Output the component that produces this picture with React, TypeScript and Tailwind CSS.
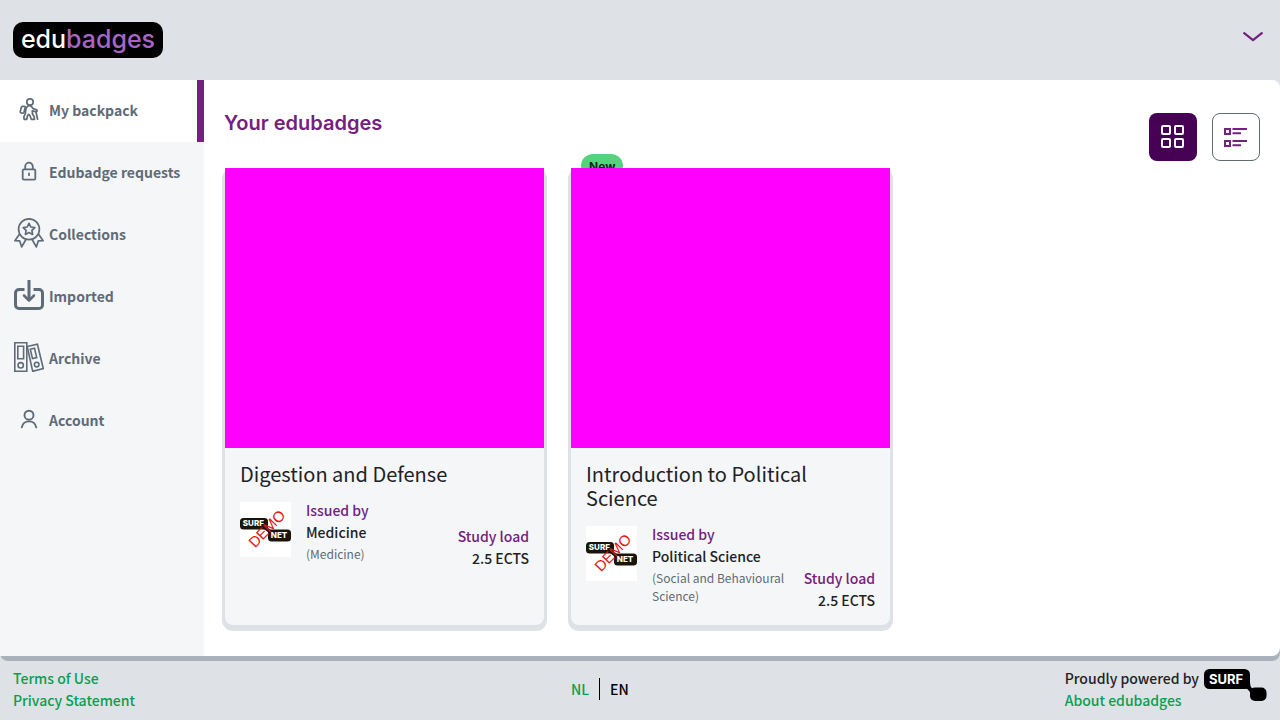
import type { ReactNode } from "react";

const BODY_FONT = "font-['Noto_Sans_CJK_SC','Noto_Sans',sans-serif]";

function BackpackIcon() {
  return (
    <svg width="30" height="30" viewBox="0 0 30 30" fill="none" stroke="currentColor" strokeWidth="1.7" strokeLinejoin="round" strokeLinecap="round" aria-hidden="true">
      <circle cx="16" cy="8" r="3.200" />
      <path d="M8.700 12.400h1.600c.8 0 1.100.5.900 1.200l-1.200 4.700c-.2.700-.6 1-1.300.9l-1.500-.3c-.8-.2-1.100-.7-.9-1.500l.9-3.800c.2-.8.700-1.200 1.500-1.200z" />
      <path d="M13.400 12.400c1.200-.9 3-.9 4.200.3l1.400 1.900 3.200.9c1.500.6 1.200 2.300-.4 2.200l-3.600-.8.300 3.100 1.700 2.800.3 2.500h-3.200l-1.500-4-1.200-1-1 1.200-.9 3.800h-2.600l-.2-2.600 1.500-3.200.5-4.700z" />
      <path d="M22 18l1.600 7.200" />
    </svg>
  );
}

function LockIcon() {
  return (
    <svg width="30" height="30" viewBox="0 0 30 30" fill="none" stroke="currentColor" strokeWidth="1.800" strokeLinejoin="round" strokeLinecap="round" aria-hidden="true">
      <rect x="8.700" y="13.300" width="12.600" height="10.300" rx="1.200" />
      <path d="M11.200 13v-2.500a3.800 3.800 0 0 1 7.600 0V13M15 17.500v1.700" />
    </svg>
  );
}

function CollectionIcon() {
  return (
    <svg width="30" height="30" viewBox="0 0 30 30" fill="none" stroke="currentColor" strokeWidth="1.700" strokeLinejoin="round" aria-hidden="true">
      <circle cx="15" cy="11.200" r="10.400" />
      <path d="M15 5.300l1.800 3.700 4 .6-2.900 2.800.7 4-3.600-1.900-3.600 1.900.7-4-2.900-2.800 4-.6z" />
      <path d="M5.400 16.200L.9 22.700l4.800.2 2 6 4.200-7.400M24.600 16.200l4.500 6.500-4.800.2-2 6-4.200-7.400" />
    </svg>
  );
}

function ImportIcon() {
  return (
    <svg width="30" height="30" viewBox="0 0 30 30" fill="none" stroke="currentColor" strokeWidth="3" strokeLinecap="butt" strokeLinejoin="round" aria-hidden="true">
      <path d="M10.500 9.500H5a3.500 3.500 0 0 0-3.500 3.500v12A3.500 3.500 0 0 0 5 28.500h20a3.500 3.500 0 0 0 3.500-3.500V13A3.500 3.500 0 0 0 25 9.500h-5.500" />
      <path d="M15 0v19" />
      <path d="M10 15.500l5 5 5-5" strokeWidth="2.500" strokeLinecap="round" />
    </svg>
  );
}

function ArchiveIcon() {
  return (
    <svg width="30" height="30" viewBox="0 0 30 30" fill="none" stroke="currentColor" strokeWidth="1.600" aria-hidden="true">
      <path d="M.8.8h12v28.400H.8z" />
      <path d="M3.800 4.200h5.800v12.600H3.800z" />
      <circle cx="6.700" cy="23.300" r="2.700" />
      <path d="M13.200 4.500l10.200-2.300 5.900 24.300-10.600 2.800z" />
      <path d="M16.300 7.300l4.200-1 2.200 9.300-4.200 1z" />
      <circle cx="22.700" cy="22.600" r="2.300" />
    </svg>
  );
}

function AccountIcon() {
  return (
    <svg width="30" height="30" viewBox="0 0 30 30" fill="none" stroke="currentColor" strokeWidth="1.900" strokeLinecap="round" aria-hidden="true">
      <circle cx="15" cy="11.200" r="4.500" />
      <path d="M7.800 23.400c.7-3.700 3.700-6 7.200-6s6.500 2.300 7.200 6" />
    </svg>
  );
}

const navItems: { label: string; icon: ReactNode; active?: boolean }[] = [
  { label: "My backpack", icon: <BackpackIcon />, active: true },
  { label: "Edubadge requests", icon: <LockIcon /> },
  { label: "Collections", icon: <CollectionIcon /> },
  { label: "Imported", icon: <ImportIcon /> },
  { label: "Archive", icon: <ArchiveIcon /> },
  { label: "Account", icon: <AccountIcon /> },
];

function EdubadgesLogo() {
  return (
    <a href="#" className="flex h-9 w-[150px] items-center justify-center rounded-[10px] bg-black pb-0.5 font-['Inter',sans-serif] text-[25px] font-medium leading-8 text-white">
      <span>edu</span>
      <span className="text-[#a766c4]">badges</span>
    </a>
  );
}

function IssuerLogo() {
  return (
    <svg width="51" height="55" viewBox="0 0 51 55" className="mt-[3px] shrink-0" role="img" aria-label="SURFnet">
      <rect width="51" height="55" fill="#fff" />
      <rect x="0" y="16" width="28" height="11.500" rx="3.500" fill="#1a1508" />
      <rect x="28" y="27.500" width="23" height="12" rx="3.500" fill="#1a1508" />
      <path d="M24 27l5 4 2-3-4-3z" fill="#1a1508" />
      <text x="2.800" y="24.400" fontSize="8" fontWeight="800" fontFamily="Inter, sans-serif" fill="#fff">SURF</text>
      <text x="30.800" y="36.200" fontSize="8" fontWeight="800" fontFamily="Inter, sans-serif" fill="#fff">NET</text>
      <text x="0" y="0" fontSize="15" fontFamily="Liberation Sans, sans-serif" fill="#e3141a" transform="translate(15 46.500) rotate(-46)">DEMO</text>
    </svg>
  );
}

function SurfLogo() {
  return (
    <svg width="63" height="33" viewBox="0 0 63 33" role="img" aria-label="SURF">
      <rect x="0" y="0" width="46" height="20" rx="5.500" fill="#000" />
      <path d="M40 19c3 0 5 2 7 6l4-5c-4 0-5-3-5-8z" fill="#000" />
      <rect x="46" y="18.500" width="16.500" height="13.500" rx="5" fill="#000" />
      <text x="5" y="14.500" fontSize="13" fontWeight="700" fontFamily="Inter, sans-serif" fill="#fff">SURF</text>
    </svg>
  );
}

interface Badge {
  title: string;
  issuer: string;
  faculty: string;
  load: string;
  isNew?: boolean;
}

const badges: Badge[] = [
  { title: "Digestion and Defense", issuer: "Medicine", faculty: "(Medicine)", load: "2.5 ECTS" },
  { title: "Introduction to Political Science", issuer: "Political Science", faculty: "(Social and Behavioural Science)", load: "2.5 ECTS", isNew: true },
];

function BadgeCard({ badge }: { badge: Badge }) {
  return (
    <article className="relative w-[319px] rounded-lg bg-[#f4f6f8] shadow-[0_3px_0_3px_#dee1e6]">
      {badge.isNew && (
        <span className="absolute -top-3.5 left-2.5 h-6 rounded-xl bg-[#54d27d] px-2 font-['Inter',sans-serif] text-xs font-bold leading-[26px] text-[#1f2225]">New</span>
      )}
      <div className="relative h-[280px] bg-[#ff00ff]" />
      <div className="px-[15px] py-[14px]">
        <h2 className="text-[20px] leading-6">{badge.title}</h2>
        <div className="mt-[13px] flex">
          <IssuerLogo />
          <div className="ml-[15px] flex-1 pb-1.5">
            <p className="font-medium text-[#73217e]">Issued by</p>
            <p className="font-medium">{badge.issuer}</p>
            <p className="mt-0.5 text-[12px] leading-[18px] text-[#5f6b77]">{badge.faculty}</p>
          </div>
          <div className="shrink-0 self-end text-right font-medium">
            <p className="text-[#73217e]">Study load</p>
            <p>{badge.load}</p>
          </div>
        </div>
      </div>
    </article>
  );
}

export default function App() {
  return (
    <div className={`flex min-h-screen flex-col bg-[#dee1e6] text-[14px] leading-[22px] text-[#1f2225] ${BODY_FONT}`}>
      <header className="flex h-20 items-center justify-between pr-[15px] pl-[13px]">
        <EdubadgesLogo />
        <button type="button" aria-label="Open menu" className="p-0.5 pb-[9px] text-[#73217e]">
          <svg width="20" height="10" viewBox="0 0 20 10" fill="none" stroke="currentColor" strokeWidth="2.200" strokeLinecap="round" strokeLinejoin="round" aria-hidden="true">
            <path d="M1.200 1.200l8.800 7 8.800-7" />
          </svg>
        </button>
      </header>

      <div className="flex flex-1 rounded-r-lg rounded-bl-lg bg-white shadow-[0_5px_0_#a9b2bc]">
        <nav className="w-[204px] shrink-0 bg-[#f4f6f8] font-bold text-[#5f6b77]">
          {navItems.map((item) => (
            <a
              key={item.label}
              href="#"
              className={
                item.active
                  ? "flex h-[62px] items-center gap-[5px] border-r-[7px] border-[#73217e] bg-white pb-1 pl-3.5"
                  : "flex h-[62px] items-center gap-[5px] pb-1 pl-3.5"
              }
            >
              {item.icon}
              <span className="pt-0.5">{item.label}</span>
            </a>
          ))}
        </nav>

        <main className="flex-1 px-5 pt-[33px] pb-[31px]">
          <div className="flex items-start justify-between">
            <h1 className="font-['Inter',sans-serif] text-[20px] font-semibold leading-5 text-[#73217e]">Your edubadges</h1>
            <div className="flex gap-[15px]">
              <button type="button" aria-label="Grid view" className="flex size-12 items-center justify-center rounded-lg bg-[#460054] text-white">
                <svg width="24" height="24" viewBox="0 0 24 24" fill="none" stroke="currentColor" strokeWidth="2" aria-hidden="true">
                  <rect x="1" y="1" width="8" height="8" rx="1" />
                  <rect x="14" y="1" width="8" height="8" rx="1" />
                  <rect x="1" y="14" width="8" height="8" rx="1" />
                  <rect x="14" y="14" width="8" height="8" rx="1" />
                </svg>
              </button>
              <button type="button" aria-label="List view" className="flex size-12 items-center justify-center rounded-lg border border-[#5f6b77] bg-white text-[#73217e]">
                <svg width="24" height="24" viewBox="0 0 24 24" fill="none" stroke="currentColor" strokeWidth="2" aria-hidden="true">
                  <rect x="1" y="4" width="5" height="5" />
                  <rect x="1" y="16" width="5" height="5" />
                  <path d="M8.500 4H23M8.500 8.300h8.500M8.500 16H23M8.500 20.300h8.500" />
                </svg>
              </button>
            </div>
          </div>
          <div className="mt-[7px] ml-px flex flex-wrap gap-[27px]">
            {badges.map((badge) => (
              <BadgeCard key={badge.title} badge={badge} />
            ))}
          </div>
        </main>
      </div>

      <footer className="flex items-center justify-between px-[13px] pt-[11px] pb-[9px]">
        <div className="flex flex-col font-medium text-[#0a9e50]">
          <a href="#">Terms of Use</a>
          <a href="#">Privacy Statement</a>
        </div>
        <div className="flex font-medium">
          <a href="#" className="border-r border-black pr-2.5 text-[#0a9e50]">NL</a>
          <a href="#" className="pl-2.5 text-black">EN</a>
        </div>
        <div className="flex items-start">
          <div className="flex flex-col font-medium">
            <span>Proudly powered by</span>
            <a href="#" className="text-[#0a9e50]">About edubadges</a>
          </div>
          <div className="ml-[5px] pt-0.5">
            <SurfLogo />
          </div>
        </div>
      </footer>
    </div>
  );
}
